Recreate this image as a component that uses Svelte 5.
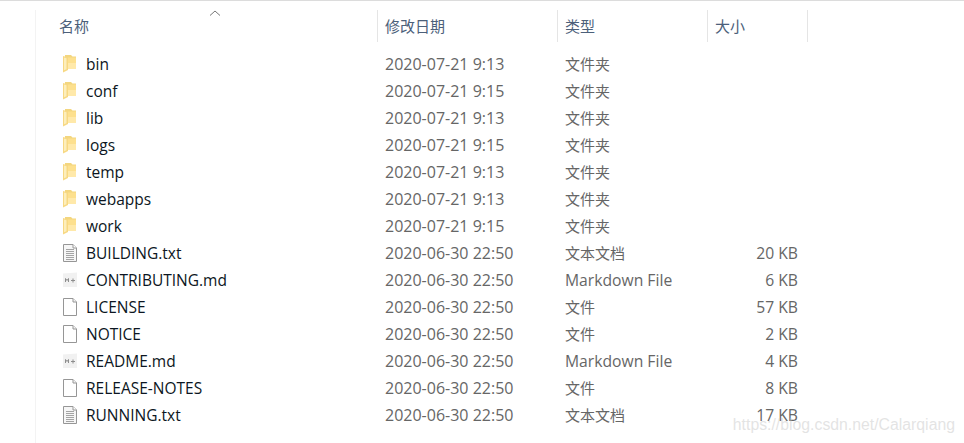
<script>
  const D1 = '2020-07-21 9:13'
  const D2 = '2020-07-21 9:15'
  const D3 = '2020-06-30 22:50'
  const files = [
    { icon: 'folder', name: 'bin', date: D1, type: '文件夹', size: '' },
    { icon: 'folder', name: 'conf', date: D2, type: '文件夹', size: '' },
    { icon: 'folder', name: 'lib', date: D1, type: '文件夹', size: '' },
    { icon: 'folder', name: 'logs', date: D2, type: '文件夹', size: '' },
    { icon: 'folder', name: 'temp', date: D1, type: '文件夹', size: '' },
    { icon: 'folder', name: 'webapps', date: D1, type: '文件夹', size: '' },
    { icon: 'folder', name: 'work', date: D2, type: '文件夹', size: '' },
    { icon: 'text', name: 'BUILDING.txt', date: D3, type: '文本文档', size: '20 KB' },
    { icon: 'md', name: 'CONTRIBUTING.md', date: D3, type: 'Markdown File', size: '6 KB' },
    { icon: 'blank', name: 'LICENSE', date: D3, type: '文件', size: '57 KB' },
    { icon: 'blank', name: 'NOTICE', date: D3, type: '文件', size: '2 KB' },
    { icon: 'md', name: 'README.md', date: D3, type: 'Markdown File', size: '4 KB' },
    { icon: 'blank', name: 'RELEASE-NOTES', date: D3, type: '文件', size: '8 KB' },
    { icon: 'text', name: 'RUNNING.txt', date: D3, type: '文本文档', size: '17 KB' }
  ]
</script>

<div class="explorer">
  <div class="head">
    <div class="col name">
      名称
      <svg class="sort" width="12" height="6" viewBox="0 0 12 6"><path d="M1 5.500 6 1l5 4.500" fill="none" stroke="#777" /></svg>
    </div>
    <div class="col date">修改日期</div>
    <div class="col type">类型</div>
    <div class="col size">大小</div>
  </div>

  <div class="list">
    {#each files as f}
      <div class="row">
        <div class="cell-name">
          {#if f.icon === 'folder'}
            <svg width="16" height="18" viewBox="0 0 16 18">
              <path d="M3 0h6l1.500 1.500H14V14H3z" fill="#f3d67f" />
              <path d="M6 2.500h8V14H6z" fill="#fde08e" />
              <path d="M6 8h8v6H6z" fill="#ffe9aa" />
              <path d="M1 1l5 1.500v12.500l-5 2.500z" fill="#f7d882" />
              <path d="M2 2.500l2.500 .8v11l-2.500 1z" fill="#fdeebb" />
            </svg>
          {:else if f.icon === 'text'}
            <svg width="16" height="18" viewBox="0 0 16 18">
              <path d="M1.500 .5h9.500l3.500 3.500v13.500h-13z" fill="#f6f6f6" stroke="#969696" />
              <path d="M11 .5V4h3.500" fill="#fff" stroke="#969696" />
              <path d="M4 5.500h8M4 7.500h8M4 9.500h8M4 11.500h8M4 13.500h8M4 15.500h8" stroke="#a4a4a4" />
            </svg>
          {:else if f.icon === 'md'}
            <svg width="16" height="18" viewBox="0 0 16 18">
              <path d="M1 2.500 15 1.500V16H1z" fill="#f1f1f1" />
              <path d="M3.500 11V7.500l1.500 2 1.500-2V11" fill="none" stroke="#8d8d8d" />
              <path d="M9 9.500h4M11 7.500v4" fill="none" stroke="#8d8d8d" />
            </svg>
          {:else}
            <svg width="16" height="18" viewBox="0 0 16 18">
              <path d="M1.500 .5h9.500l3.500 3.500v13.500h-13z" fill="#fff" stroke="#969696" />
              <path d="M11 .5V4h3.500" fill="#f4f4f4" stroke="#969696" />
            </svg>
          {/if}
          <span>{f.name}</span>
        </div>
        <div class="cell date">{f.date}</div>
        <div class="cell type" class:latin={f.type === 'Markdown File'}>{f.type}</div>
        <div class="cell size">{f.size}</div>
      </div>
    {/each}
  </div>

  <div class="watermark">https://blog.csdn.net/Calarqiang</div>
</div>

<style>
  :global(body) {
    background: #fff;
    overflow: hidden;
  }

  .explorer {
    position: relative;
    box-sizing: border-box;
    width: 964px;
    height: 443px;
    border-top: 1px solid #dcdcdc;
    padding: 9px 0 0 35px;
    font-family: "Open Sans", "Noto Sans CJK SC", sans-serif;
    font-size: 15.700px;
  }

  .explorer::before {
    content: "";
    position: absolute;
    left: 35px;
    top: 9px;
    bottom: 0;
    width: 1px;
    background: #f3f3f3;
  }

  .head {
    display: flex;
    height: 32px;
    color: #4c607a;
    font-size: 15px;
  }

  .col {
    box-sizing: border-box;
    display: flex;
    align-items: center;
    padding: 0 0 2px 7px;
    border-right: 1px solid #e5e5e5;
  }

  .col.name {
    position: relative;
    width: 343px;
    padding-left: 24px;
  }

  .col.date {
    width: 180px;
  }

  .col.type {
    width: 150px;
  }

  .col.size {
    width: 100px;
  }

  .sort {
    position: absolute;
    left: 174px;
    top: 0;
  }

  .list {
    padding-top: 8px;
  }

  .row {
    display: flex;
    height: 27px;
    align-items: center;
    white-space: nowrap;
  }

  .cell-name {
    display: flex;
    align-items: center;
    width: 343px;
    padding-left: 27px;
    box-sizing: border-box;
    gap: 8px;
    color: #0c1622;
    font-size: 15.500px;
  }

  .cell {
    box-sizing: border-box;
    color: #666;
    padding-left: 7px;
  }

  .cell.date {
    width: 180px;
    font-size: 16px;
  }

  .cell.type {
    width: 150px;
    font-size: 15px;
  }

  .cell.type.latin {
    font-size: 15.700px;
  }

  .cell.size {
    width: 90px;
    padding: 0;
    text-align: right;
  }

  .watermark {
    position: absolute;
    right: 9px;
    bottom: 9px;
    font-family: "Liberation Sans", sans-serif;
    font-size: 15.800px;
    color: rgba(200, 200, 200, 0.5);
  }
</style>
